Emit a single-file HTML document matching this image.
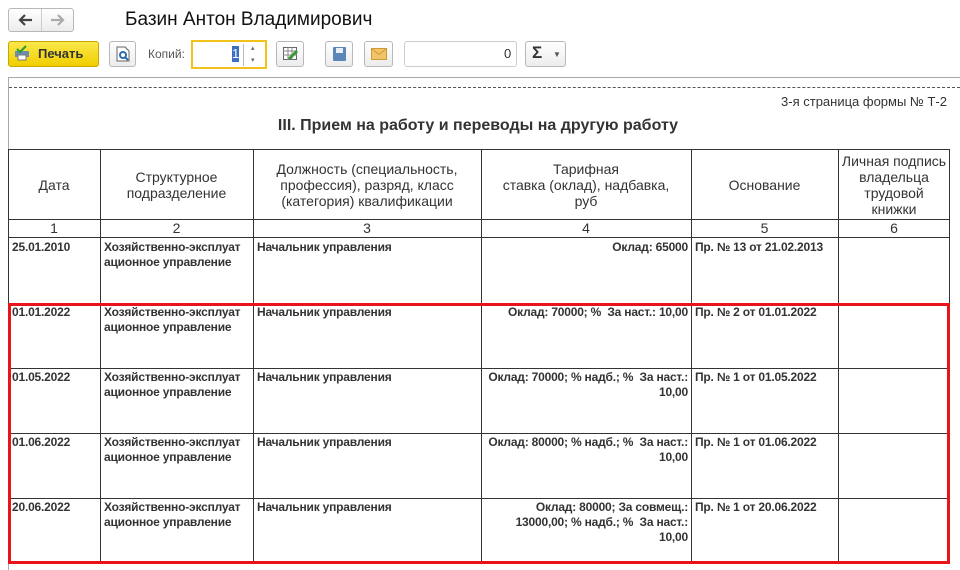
<!DOCTYPE html>
<html><head><meta charset="utf-8"><style>
*{margin:0;padding:0;box-sizing:border-box}
body{width:960px;height:570px;background:#fff;position:relative;overflow:hidden;font-family:"Liberation Sans",Arial,sans-serif;color:#222}
.a{position:absolute}
.btn{position:absolute;border:1px solid #b8b8b8;border-radius:3px;background:linear-gradient(#fff,#ececec);height:25px}
.v{position:absolute;background:#333;width:1px}
.h{position:absolute;background:#333;height:1px}
.hd{position:absolute;font-size:14px;line-height:16px;text-align:center;color:#333;display:flex;align-items:center;justify-content:center}
.n{position:absolute;font-size:14px;line-height:18px;text-align:center;color:#333}
.d{position:absolute;font-size:12px;font-weight:bold;line-height:15px;color:#333;white-space:nowrap;letter-spacing:-0.2px}
.r{text-align:right}
</style></head><body>
<div class="btn" style="left:8px;top:8px;width:66px;height:24px;border-radius:3px"></div>
<div class="a" style="left:41px;top:9px;width:1px;height:22px;background:#ccc"></div>
<svg class="a" style="left:17px;top:13px" width="16" height="14"><path d="M15 7H3M8 2L3 7l5 5" stroke="#444" stroke-width="2.2" fill="none"/></svg>
<svg class="a" style="left:50px;top:13px" width="16" height="14"><path d="M1 7h12M8 2l5 5-5 5" stroke="#aaa" stroke-width="2.2" fill="none"/></svg>
<div class="a" style="left:125px;top:9px;font-size:19px;color:#111">Базин Антон Владимирович</div>

<div class="a" style="left:8px;top:41px;width:91px;height:26px;border:1px solid #c8a800;border-radius:3px;background:linear-gradient(#fbe84a,#f1ce00)"></div>
<div class="a" style="left:14px;top:45px;width:16px;height:16px"><svg width="16" height="16"><rect x="1" y="6" width="14" height="6" fill="#6a8fb0"/><rect x="4" y="10" width="8" height="5" fill="#fff" stroke="#777"/><path d="M3 4l3 3 6-6" stroke="#2a9a2a" stroke-width="2" fill="none"/></svg></div>
<div class="a" style="left:38px;top:46px;font-size:13px;font-weight:bold;color:#333">Печать</div>
<div class="btn" style="left:109px;top:41px;width:27px;height:26px"></div>
<div class="a" style="left:116px;top:46px"><svg width="14" height="16"><path d="M1 1h8l4 4v10H1z" fill="#fff" stroke="#666"/><circle cx="7" cy="9" r="3" fill="none" stroke="#2a6ab0" stroke-width="2"/><path d="M9 11l3 3" stroke="#2a6ab0" stroke-width="2"/></svg></div>
<div class="a" style="left:148px;top:47px;font-size:12px;color:#555">Копий:</div>
<div class="a" style="left:191px;top:40px;width:76px;height:29px;border:2px solid #f3c21a;background:#fff"></div>
<div class="a" style="left:232px;top:46px;width:7px;height:16px;background:#3a6fc4;color:#fff;font-size:13px;line-height:16px">1</div>
<div class="a" style="left:243px;top:44px;width:1px;height:22px;background:#bbb"></div>
<div class="a" style="left:251px;top:44px;font-size:7px;color:#666">▴</div>
<div class="a" style="left:251px;top:56px;font-size:7px;color:#666">▾</div>
<div class="btn" style="left:276px;top:41px;width:28px;height:26px"></div>
<div class="a" style="left:283px;top:47px"><svg width="16" height="14"><rect x="0.5" y="0.5" width="13" height="12" fill="#fff" stroke="#666"/><path d="M0 4h14M0 8h14M5 0v13M9 0v13" stroke="#888"/><path d="M6 12l8-8" stroke="#3a9a3a" stroke-width="3"/></svg></div>
<div class="btn" style="left:325px;top:41px;width:28px;height:26px"></div>
<div class="a" style="left:333px;top:47px;width:13px;height:14px;background:#5b86b8;border-radius:1px"><div style="margin:1px 3px;height:5px;background:#e6eef6"></div></div>
<div class="btn" style="left:364px;top:41px;width:29px;height:26px"></div>
<svg class="a" style="left:371px;top:48px" width="16" height="12"><rect x="0.5" y="0.5" width="15" height="11" fill="#f2c46a" stroke="#d09a30"/><path d="M0.5 0.5l7.5 6 7.5-6" stroke="#d09a30" fill="none"/></svg>
<div class="a" style="left:404px;top:41px;width:113px;height:26px;border:1px solid #ccc;border-radius:3px;background:#fff"></div>
<div class="a" style="left:504px;top:46px;font-size:13px;color:#333">0</div>
<div class="btn" style="left:525px;top:41px;width:41px;height:26px"></div>
<div class="a" style="left:532px;top:43px;font-size:17px;font-weight:bold;color:#333">Σ</div>
<div class="a" style="left:553px;top:50px;font-size:8px;color:#555">▼</div>

<div class="a" style="left:8px;top:77px;width:952px;height:493px;border-left:1px solid #aaa;border-top:1px solid #aaa"></div>
<div class="a" style="left:9px;top:87px;width:951px;border-top:1px dashed #555"></div>
<div class="a" style="left:700px;top:94px;width:247px;text-align:right;font-size:13px;color:#333">3-я страница формы № Т-2</div>
<div class="a" style="left:0;top:117px;width:956px;text-align:center;font-size:16px;font-weight:bold;color:#333">III. Прием на работу и переводы на другую работу</div>

<div class="h" style="left:8px;top:149px;width:942px"></div>
<div class="h" style="left:8px;top:219px;width:942px"></div>
<div class="h" style="left:8px;top:237px;width:942px"></div>
<div class="h" style="left:8px;top:303px;width:942px"></div>
<div class="h" style="left:8px;top:368px;width:942px"></div>
<div class="h" style="left:8px;top:433px;width:942px"></div>
<div class="h" style="left:8px;top:498px;width:942px"></div>
<div class="v" style="left:8px;top:149px;height:414px"></div>
<div class="v" style="left:100px;top:149px;height:414px"></div>
<div class="v" style="left:253px;top:149px;height:414px"></div>
<div class="v" style="left:481px;top:149px;height:414px"></div>
<div class="v" style="left:691px;top:149px;height:414px"></div>
<div class="v" style="left:838px;top:149px;height:414px"></div>
<div class="v" style="left:949px;top:149px;height:414px"></div>

<div class="hd" style="left:8px;top:150px;width:92px;height:69px">Дата</div>
<div class="hd" style="left:100px;top:150px;width:153px;height:69px">Структурное<br>подразделение</div>
<div class="hd" style="left:253px;top:150px;width:228px;height:69px">Должность (специальность,<br>профессия), разряд, класс<br>(категория) квалификации</div>
<div class="hd" style="left:481px;top:150px;width:210px;height:69px">Тарифная<br>ставка (оклад), надбавка,<br>руб</div>
<div class="hd" style="left:691px;top:150px;width:147px;height:69px">Основание</div>
<div class="hd" style="left:838px;top:150px;width:112px;height:69px">Личная подпись<br>владельца<br>трудовой<br>книжки</div>
<div class="n" style="left:8px;top:219px;width:92px">1</div>
<div class="n" style="left:100px;top:219px;width:153px">2</div>
<div class="n" style="left:253px;top:219px;width:228px">3</div>
<div class="n" style="left:481px;top:219px;width:210px">4</div>
<div class="n" style="left:691px;top:219px;width:147px">5</div>
<div class="n" style="left:838px;top:219px;width:112px">6</div>

<div class="d" style="left:12px;top:240px">25.01.2010</div>
<div class="d" style="left:104px;top:240px">Хозяйственно-эксплуат<br>ационное управление</div>
<div class="d" style="left:257px;top:240px">Начальник управления</div>
<div class="d r" style="left:484px;top:240px;width:204px">Оклад: 65000</div>
<div class="d" style="left:695px;top:240px">Пр. № 13 от 21.02.2013</div>

<div class="d" style="left:12px;top:305px">01.01.2022</div>
<div class="d" style="left:104px;top:305px">Хозяйственно-эксплуат<br>ационное управление</div>
<div class="d" style="left:257px;top:305px">Начальник управления</div>
<div class="d r" style="left:484px;top:305px;width:204px">Оклад: 70000; %&nbsp; За наст.: 10,00</div>
<div class="d" style="left:695px;top:305px">Пр. № 2 от 01.01.2022</div>

<div class="d" style="left:12px;top:370px">01.05.2022</div>
<div class="d" style="left:104px;top:370px">Хозяйственно-эксплуат<br>ационное управление</div>
<div class="d" style="left:257px;top:370px">Начальник управления</div>
<div class="d r" style="left:484px;top:370px;width:204px">Оклад: 70000; % надб.; %&nbsp; За наст.:<br>10,00</div>
<div class="d" style="left:695px;top:370px">Пр. № 1 от 01.05.2022</div>

<div class="d" style="left:12px;top:435px">01.06.2022</div>
<div class="d" style="left:104px;top:435px">Хозяйственно-эксплуат<br>ационное управление</div>
<div class="d" style="left:257px;top:435px">Начальник управления</div>
<div class="d r" style="left:484px;top:435px;width:204px">Оклад: 80000; % надб.; %&nbsp; За наст.:<br>10,00</div>
<div class="d" style="left:695px;top:435px">Пр. № 1 от 01.06.2022</div>

<div class="d" style="left:12px;top:500px">20.06.2022</div>
<div class="d" style="left:104px;top:500px">Хозяйственно-эксплуат<br>ационное управление</div>
<div class="d" style="left:257px;top:500px">Начальник управления</div>
<div class="d r" style="left:484px;top:500px;width:204px">Оклад: 80000; За совмещ.:<br>13000,00; % надб.; %&nbsp; За наст.:<br>10,00</div>
<div class="d" style="left:695px;top:500px">Пр. № 1 от 20.06.2022</div>

<div class="a" style="left:8px;top:303px;width:942px;height:261px;border:3px solid #e8141c"></div>
</body></html>
